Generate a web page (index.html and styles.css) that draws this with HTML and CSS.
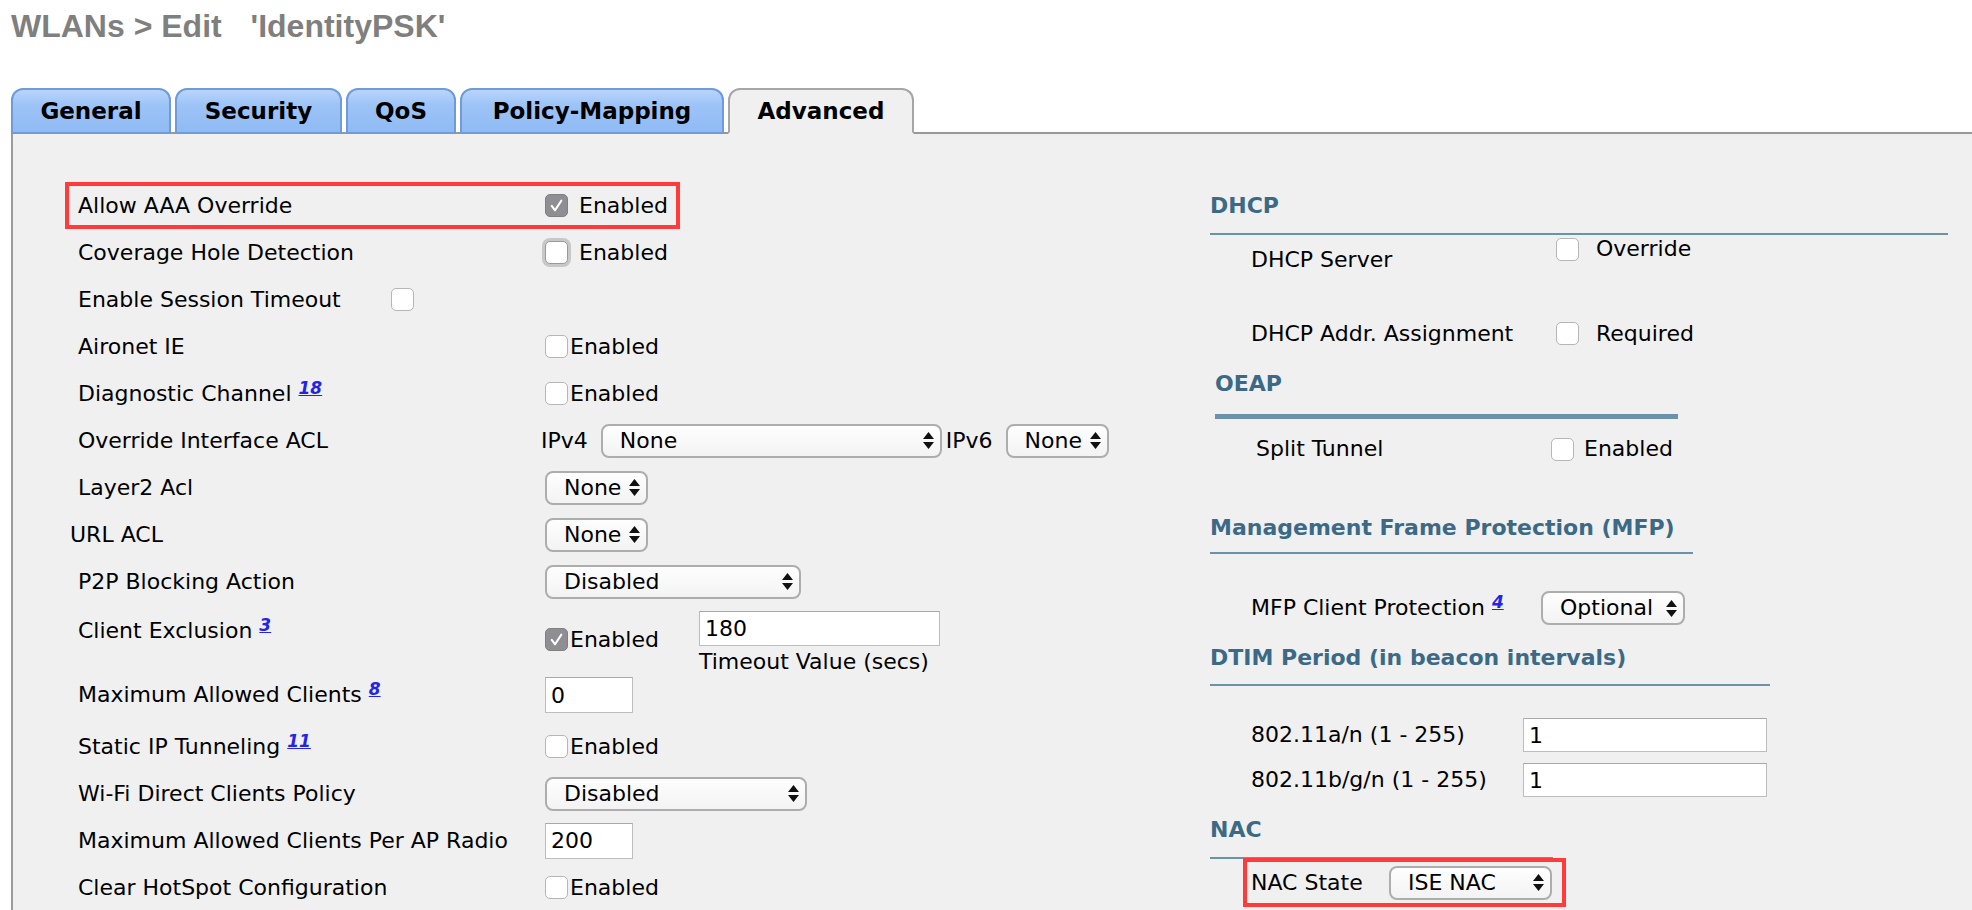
FILE: index.html
```html
<!DOCTYPE html>
<html>
<head>
  <meta charset="UTF-8">
  <title>WLANs &gt; Edit 'IdentityPSK'</title>
  <link rel="stylesheet" href="styles.css">
</head>
<body>
  <h1 class="page-title">WLANs &gt; Edit <span class="wlan-name">'IdentityPSK'</span></h1>

  <ul class="tabs">
    <li class="tab tab-general">General</li>
    <li class="tab tab-security">Security</li>
    <li class="tab tab-qos">QoS</li>
    <li class="tab tab-policy">Policy-Mapping</li>
    <li class="tab tab-advanced active">Advanced</li>
  </ul>

  <div class="panel">
    <!-- left column -->
    <div class="settings">
      <div class="row highlight">
        <div class="label">Allow AAA Override</div>
        <div class="control">
          <span class="cb checked"><svg viewBox="0 0 22 22"><polyline points="6,11.5 9.5,16 16,6" /></svg></span>
          <span class="opt spaced">Enabled</span>
        </div>
      </div>
      <div class="row">
        <div class="label">Coverage Hole Detection</div>
        <div class="control">
          <span class="cb focus"></span>
          <span class="opt spaced">Enabled</span>
        </div>
      </div>
      <div class="row">
        <div class="label label-inline">Enable Session Timeout <span class="cb session-cb"></span></div>
        <div class="control"></div>
      </div>
      <div class="row">
        <div class="label">Aironet IE</div>
        <div class="control"><span class="cb"></span><span class="opt">Enabled</span></div>
      </div>
      <div class="row">
        <div class="label">Diagnostic Channel <a class="ref" href="#">18</a></div>
        <div class="control"><span class="cb"></span><span class="opt">Enabled</span></div>
      </div>
      <div class="row">
        <div class="label">Override Interface ACL</div>
        <div class="control">
          <span class="ip-label first">IPv4</span>
          <div class="select w-ipv4"><span>None</span><svg class="arrows" viewBox="0 0 11 17"><polygon points="0,7 5.5,0 11,7" /><polygon points="0,10 5.5,17 11,10" /></svg></div>
          <span class="ip-label">IPv6</span>
          <div class="select w-none"><span>None</span><svg class="arrows" viewBox="0 0 11 17"><polygon points="0,7 5.5,0 11,7" /><polygon points="0,10 5.5,17 11,10" /></svg></div>
        </div>
      </div>
      <div class="row">
        <div class="label">Layer2 Acl</div>
        <div class="control">
          <div class="select w-none"><span>None</span><svg class="arrows" viewBox="0 0 11 17"><polygon points="0,7 5.5,0 11,7" /><polygon points="0,10 5.5,17 11,10" /></svg></div>
        </div>
      </div>
      <div class="row">
        <div class="label outdent">URL ACL</div>
        <div class="control">
          <div class="select w-none"><span>None</span><svg class="arrows" viewBox="0 0 11 17"><polygon points="0,7 5.5,0 11,7" /><polygon points="0,10 5.5,17 11,10" /></svg></div>
        </div>
      </div>
      <div class="row">
        <div class="label">P2P Blocking Action</div>
        <div class="control">
          <div class="select w-p2p"><span>Disabled</span><svg class="arrows" viewBox="0 0 11 17"><polygon points="0,7 5.5,0 11,7" /><polygon points="0,10 5.5,17 11,10" /></svg></div>
        </div>
      </div>
      <div class="row row-excl">
        <div class="label">Client Exclusion <a class="ref" href="#">3</a></div>
        <div class="control">
          <span class="cb checked"><svg viewBox="0 0 22 22"><polyline points="6,11.5 9.5,16 16,6" /></svg></span>
          <span class="opt">Enabled</span>
          <div class="timeout">
            <input class="field field-timeout" type="text" value="180">
            <span class="caption">Timeout Value (secs)</span>
          </div>
        </div>
      </div>
      <div class="row row-clients">
        <div class="label">Maximum Allowed Clients <a class="ref" href="#">8</a></div>
        <div class="control"><input class="field field-sm" type="text" value="0"></div>
      </div>
      <div class="row">
        <div class="label">Static IP Tunneling <a class="ref" href="#">11</a></div>
        <div class="control"><span class="cb"></span><span class="opt">Enabled</span></div>
      </div>
      <div class="row">
        <div class="label">Wi-Fi Direct Clients Policy</div>
        <div class="control">
          <div class="select w-wifi"><span>Disabled</span><svg class="arrows" viewBox="0 0 11 17"><polygon points="0,7 5.5,0 11,7" /><polygon points="0,10 5.5,17 11,10" /></svg></div>
        </div>
      </div>
      <div class="row">
        <div class="label">Maximum Allowed Clients Per AP Radio</div>
        <div class="control"><input class="field field-sm" type="text" value="200"></div>
      </div>
      <div class="row">
        <div class="label">Clear HotSpot Configuration</div>
        <div class="control"><span class="cb"></span><span class="opt">Enabled</span></div>
      </div>
    </div>

    <!-- right column -->
    <div class="side">
      <div class="side-head head-dhcp">DHCP</div>
      <div class="side-row dhcp-row top-align">
        <div class="label">DHCP Server</div>
        <div class="control"><span class="cb"></span><span class="opt wide">Override</span></div>
      </div>
      <div class="side-row dhcp-row dhcp-addr">
        <div class="label">DHCP Addr. Assignment</div>
        <div class="control"><span class="cb"></span><span class="opt wide">Required</span></div>
      </div>

      <div class="side-head head-oeap">OEAP</div>
      <div class="side-row split-row">
        <div class="label">Split Tunnel</div>
        <div class="control"><span class="cb"></span><span class="opt mid">Enabled</span></div>
      </div>

      <div class="side-head head-mfp">Management Frame Protection (MFP)</div>
      <div class="side-row mfp-row">
        <div class="label">MFP Client Protection <a class="ref" href="#">4</a></div>
        <div class="control">
          <div class="select w-opt"><span>Optional</span><svg class="arrows" viewBox="0 0 11 17"><polygon points="0,7 5.5,0 11,7" /><polygon points="0,10 5.5,17 11,10" /></svg></div>
        </div>
      </div>

      <div class="side-head head-dtim">DTIM Period (in beacon intervals)</div>
      <div class="side-row dtim-row">
        <div class="label">802.11a/n (1 - 255)</div>
        <div class="control"><input class="field field-dtim" type="text" value="1"></div>
      </div>
      <div class="side-row dtim-row">
        <div class="label">802.11b/g/n (1 - 255)</div>
        <div class="control"><input class="field field-dtim" type="text" value="1"></div>
      </div>

      <div class="side-head head-nac">NAC</div>
      <div class="nac-box">
        <div class="label">NAC State</div>
        <div class="control">
          <div class="select w-nac"><span>ISE NAC</span><svg class="arrows" viewBox="0 0 11 17"><polygon points="0,7 5.5,0 11,7" /><polygon points="0,10 5.5,17 11,10" /></svg></div>
        </div>
      </div>
    </div>
  </div>
</body>
</html>
```

FILE: styles.css
```css
html, body {
  overflow: hidden;
}

body {
  margin: 0;
  padding: 8px 0 0 11px;
  font-family: "DejaVu Sans", sans-serif;
  font-size: 22px;
  line-height: 28px;
  color: #000;
  background-color: #fff;
}

.page-title {
  margin: 0;
  font-family: "Liberation Sans", Arial, sans-serif;
  font-size: 32px;
  line-height: 36px;
  font-weight: bold;
  color: #7f7f7f;
}

.wlan-name {
  margin-left: 20px;
}

/* tabs */
.tabs {
  display: flex;
  align-items: flex-end;
  gap: 4px;
  list-style: none;
  margin: 44px 0 0;
  padding: 0;
  height: 44px;
  border-bottom: 2px solid #999;
}

.tab {
  box-sizing: border-box;
  height: 46px;
  margin-bottom: -2px;
  border: 2px solid #6f9bd8;
  border-radius: 12px 12px 0 0;
  background: linear-gradient(#b9d5fb, #9dc4f7 35%, #8fbaf4);
  font-size: 23px;
  line-height: 42px;
  font-weight: bold;
  text-align: center;
  color: #000;
}

.tab-general { width: 160px; }
.tab-security { width: 167px; }
.tab-qos { width: 110px; }
.tab-policy { width: 264px; }
.tab-advanced { width: 186px; }

.tab.active {
  background: #f0f0f0;
  border-color: #a6a6a6;
  border-bottom-color: #f0f0f0;
}

/* content */
.panel {
  display: flex;
  box-sizing: border-box;
  height: 776px;
  padding-top: 48px;
  background-color: #f0f0f0;
  border-left: 2px solid #9b9b9b;
  overflow: hidden;
}

.settings {
  margin-left: 52px;
  width: 1145px;
  flex-shrink: 0;
}

.row {
  display: grid;
  grid-template-columns: 467px auto;
  align-items: center;
  box-sizing: border-box;
  height: 47px;
  padding-left: 13px;
}

.row.highlight {
  width: 615px;
  padding-left: 9px;
  border: 4px solid #ff3b3b;
}

.row-excl {
  height: 62px;
}

.row-excl > .label {
  align-self: start;
  padding-top: 12px;
}

.row-clients {
  height: 56px;
}

.label {
  white-space: nowrap;
}

.label.outdent {
  margin-left: -8px;
}

.label-inline {
  display: flex;
  align-items: center;
}

.control {
  display: flex;
  align-items: center;
  white-space: nowrap;
}

.ref {
  font-size: 17px;
  font-weight: bold;
  font-style: italic;
  color: #2424e8;
  text-decoration: underline;
  vertical-align: 7px;
  line-height: 0;
}

/* checkboxes */
.cb {
  display: inline-block;
  box-sizing: border-box;
  width: 23px;
  height: 23px;
  flex-shrink: 0;
  border: 1px solid #b6b6b6;
  border-radius: 5px;
  background-color: #fff;
}

.cb.checked {
  background-color: #8e8e93;
  border-color: #7f7f84;
}

.cb.checked svg {
  display: block;
  width: 21px;
  height: 21px;
  fill: none;
  stroke: #fff;
  stroke-width: 2.2;
  stroke-linecap: round;
  stroke-linejoin: round;
}

.cb.focus {
  border-color: #9a9a9a;
  box-shadow: 0 0 0 3px #c8c8c8;
}

.session-cb {
  margin-left: 50px;
}

.opt {
  margin-left: 2px;
}

.opt.spaced {
  margin-left: 11px;
}

.opt.mid {
  margin-left: 10px;
}

.opt.wide {
  margin-left: 17px;
}

/* selects */
.select {
  display: inline-flex;
  align-items: center;
  box-sizing: border-box;
  height: 34px;
  padding: 0 6px 0 17px;
  border: 2px solid #adadad;
  border-radius: 8px;
  background: linear-gradient(#fefefe, #f3f3f3);
  flex-shrink: 0;
}

.select .arrows {
  width: 11px;
  height: 17px;
  margin-left: auto;
  fill: #111;
}

.w-none { width: 103px; }
.w-p2p { width: 256px; }
.w-wifi { width: 262px; }
.w-ipv4 { width: 341px; }
.w-opt { width: 144px; }
.w-nac { width: 163px; }

.ip-label {
  margin: 0 13px 0 4px;
}

.ip-label.first {
  margin-left: -4px;
}

/* text inputs */
.field {
  box-sizing: border-box;
  height: 36px;
  margin: 0;
  padding: 0 5px;
  border: 1px solid #bdbdbd;
  border-top-color: #a9a9a9;
  background-color: #fff;
  font-family: inherit;
  font-size: 22px;
  color: #000;
}

.field-sm { width: 88px; }

.field-timeout {
  width: 241px;
  height: 35px;
}

.field-dtim {
  width: 244px;
  height: 34px;
}

.timeout {
  display: flex;
  flex-direction: column;
  margin-left: 40px;
  margin-top: 6px;
}

.caption {
  margin-top: 4px;
  line-height: 24px;
}

/* right column */
.side {
  width: 738px;
  flex-shrink: 0;
}

.side-head {
  font-weight: bold;
  color: #3c6a86;
  line-height: 28px;
  border-bottom: 2px solid #6a92aa;
  white-space: nowrap;
}

.head-dhcp {
  margin-top: 10px;
  padding-bottom: 13px;
  width: 738px;
}

.head-oeap {
  margin: 10px 0 0 5px;
  padding-bottom: 16px;
  border-bottom-width: 5px;
  width: 463px;
}

.head-mfp {
  margin-top: 35px;
  padding-bottom: 10px;
  width: 483px;
}

.head-dtim {
  margin-top: 19px;
  padding-bottom: 12px;
  width: 560px;
}

.head-nac {
  margin-top: 19px;
  padding-bottom: 13px;
  width: 343px;
}

.side-row {
  display: grid;
  align-items: center;
  padding-left: 41px;
}

.dhcp-row {
  grid-template-columns: 305px auto;
  height: 53px;
}

.dhcp-row.top-align {
  align-items: start;
  height: 72px;
}

.dhcp-row.top-align > .label {
  padding-top: 11px;
}

.split-row {
  grid-template-columns: 295px auto;
  padding-left: 46px;
  height: 60px;
}

.mfp-row {
  grid-template-columns: 290px auto;
  margin-top: 37px;
  height: 34px;
}

.dtim-row {
  grid-template-columns: 272px auto;
  height: 34px;
  margin-top: 11px;
}

.head-dtim + .dtim-row {
  margin-top: 32px;
}

.nac-box {
  display: grid;
  grid-template-columns: 138px auto;
  align-items: center;
  box-sizing: border-box;
  width: 323px;
  height: 49px;
  margin: -1px 0 0 33px;
  padding-left: 4px;
  border: 4px solid #ff3b3b;
}
```
